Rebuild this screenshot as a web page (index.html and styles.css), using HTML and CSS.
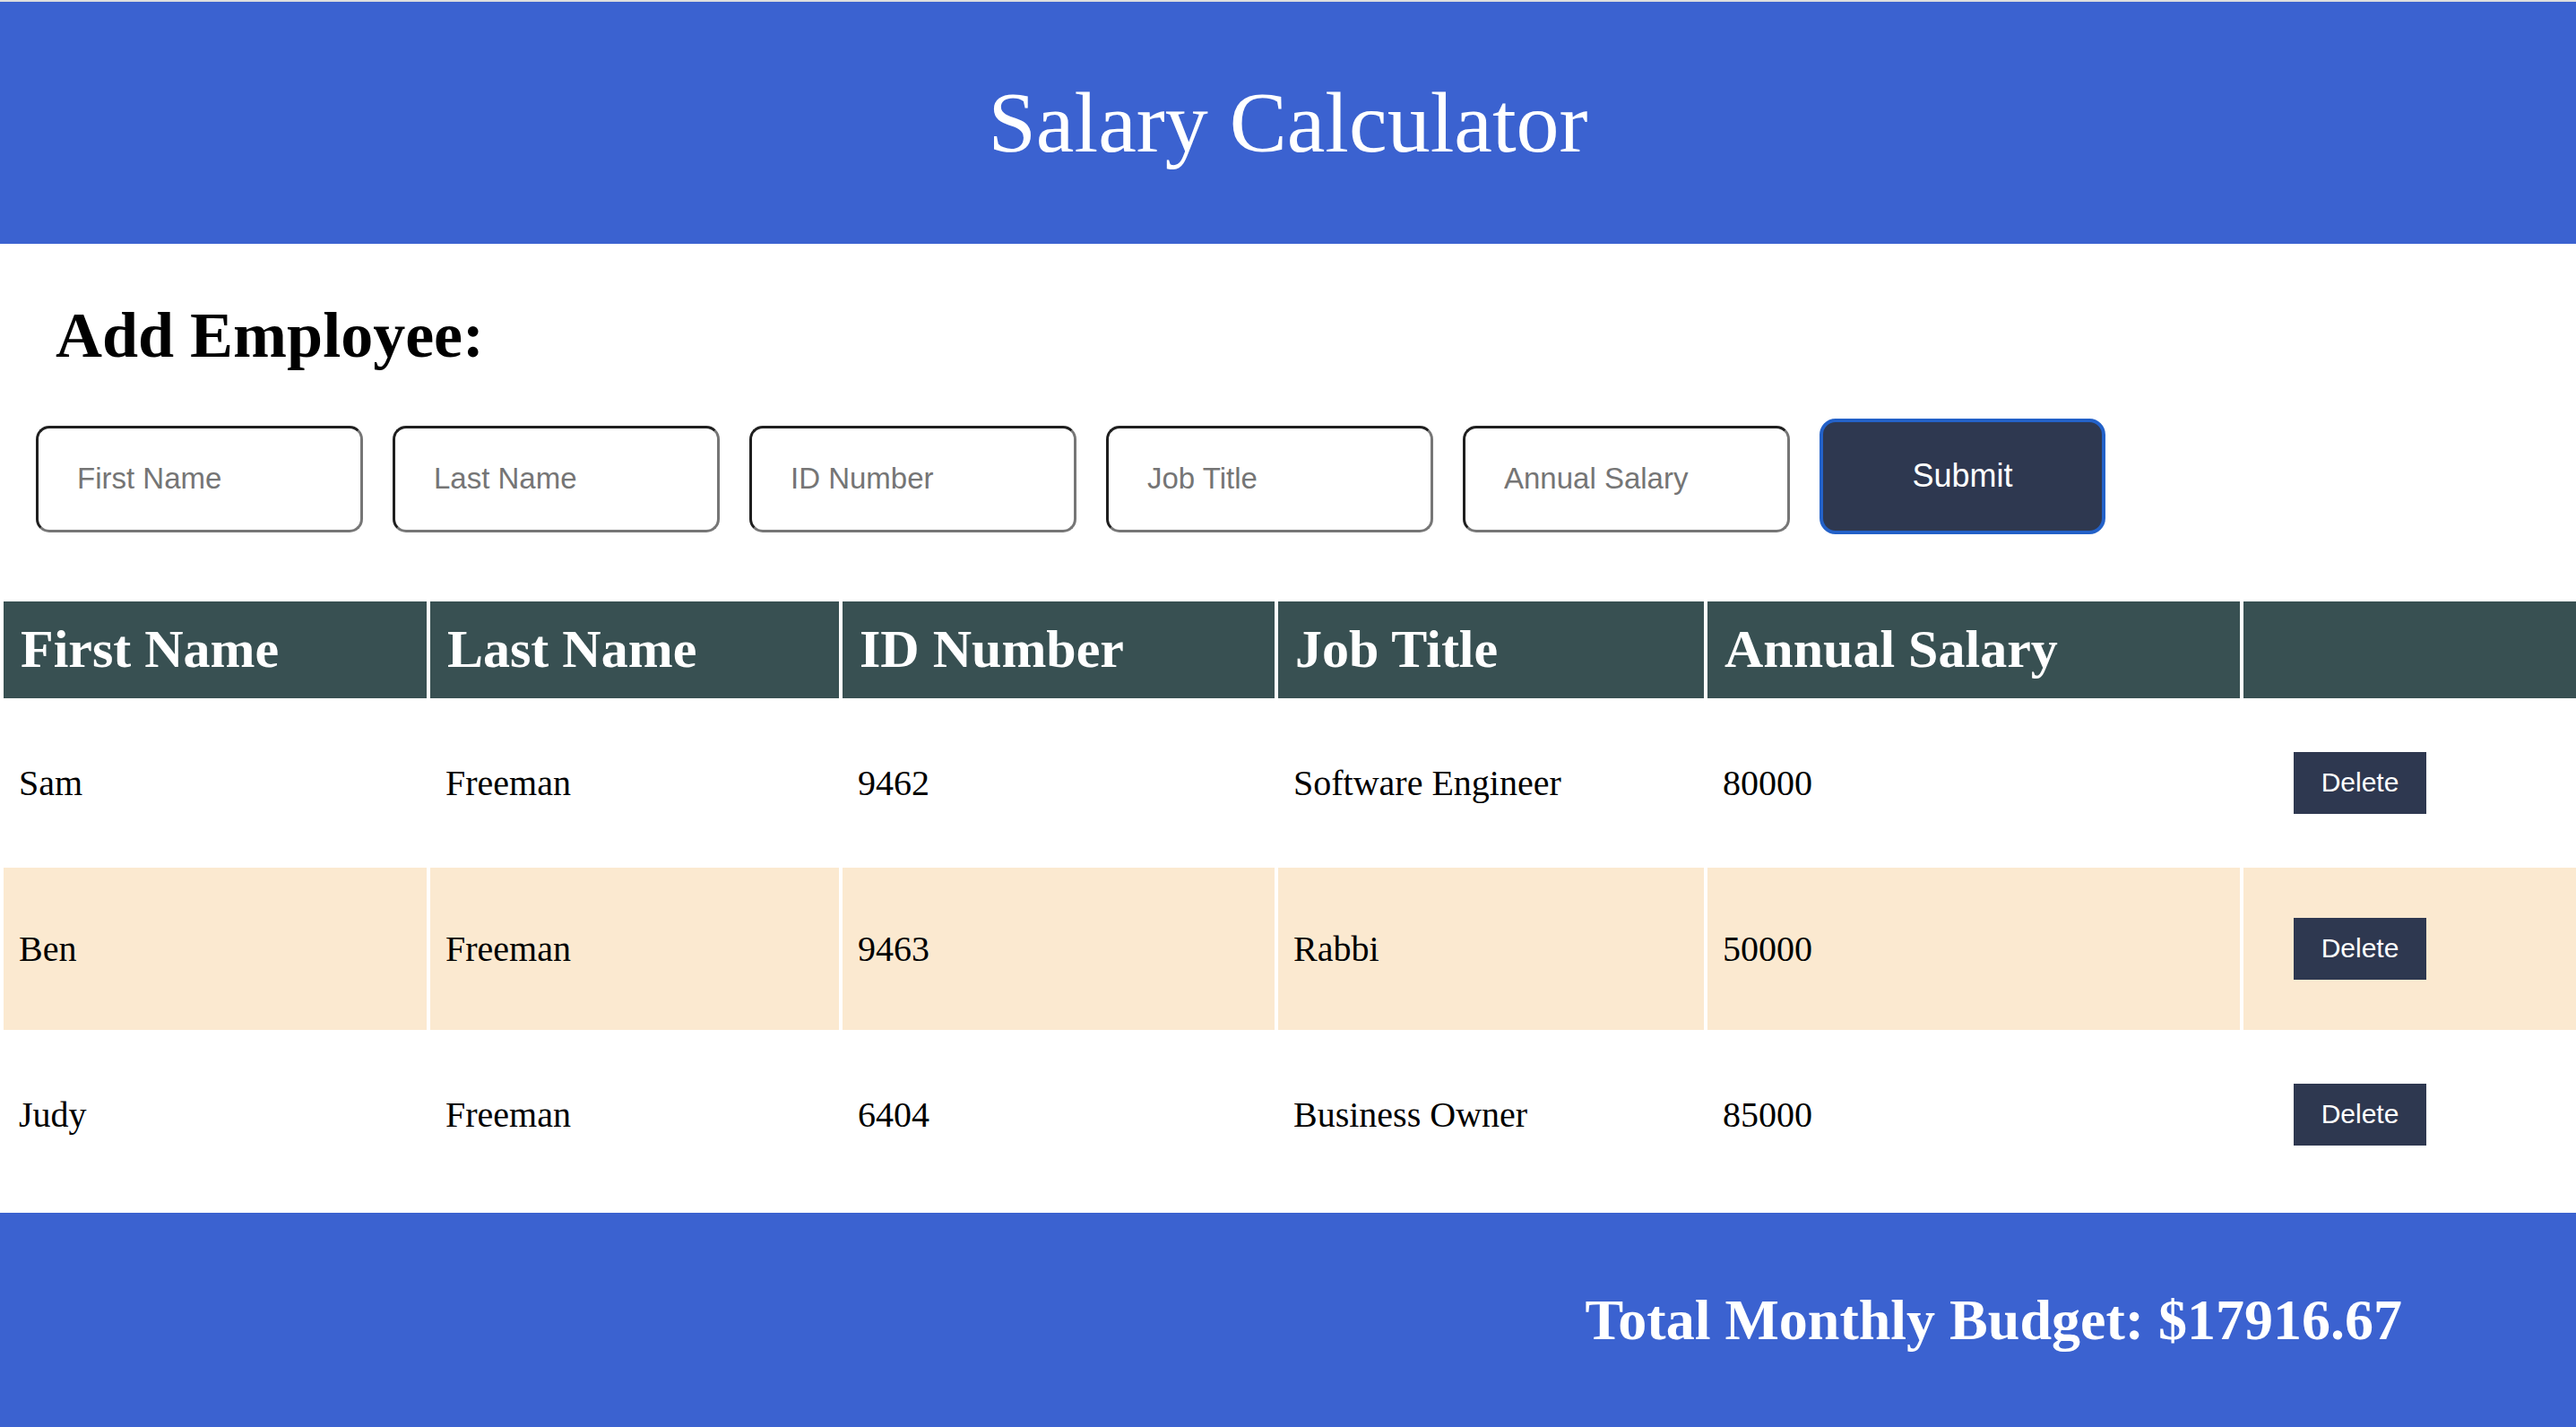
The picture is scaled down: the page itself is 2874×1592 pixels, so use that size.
FILE: index.html
```html
<!DOCTYPE html>
<html lang="en">
<head>
<meta charset="utf-8">
<title>Salary Calculator</title>
<link rel="stylesheet" href="styles.css">
</head>
<body>
  <header class="top-bar">
    <h1 class="title">Salary Calculator</h1>
  </header>

  <section class="add-section">
    <h2 class="add-title">Add Employee:</h2>
    <form class="add-form">
      <input class="field" type="text" placeholder="First Name">
      <input class="field" type="text" placeholder="Last Name">
      <input class="field" type="text" placeholder="ID Number">
      <input class="field" type="text" placeholder="Job Title">
      <input class="field" type="text" placeholder="Annual Salary">
      <button class="submit-btn" type="button">Submit</button>
    </form>
  </section>

  <table class="emp-table">
    <colgroup>
      <col class="c1"><col class="c2"><col class="c3"><col class="c4"><col class="c5"><col class="c6">
    </colgroup>
    <thead>
      <tr class="head-row">
        <th>First Name</th>
        <th>Last Name</th>
        <th>ID Number</th>
        <th>Job Title</th>
        <th>Annual Salary</th>
        <th></th>
      </tr>
    </thead>
    <tbody>
      <tr class="row">
        <td>Sam</td><td>Freeman</td><td>9462</td><td>Software Engineer</td><td>80000</td>
        <td><button class="del-btn" type="button">Delete</button></td>
      </tr>
      <tr class="row alt">
        <td>Ben</td><td>Freeman</td><td>9463</td><td>Rabbi</td><td>50000</td>
        <td><button class="del-btn" type="button">Delete</button></td>
      </tr>
      <tr class="row">
        <td>Judy</td><td>Freeman</td><td>6404</td><td>Business Owner</td><td>85000</td>
        <td><button class="del-btn" type="button">Delete</button></td>
      </tr>
    </tbody>
  </table>

  <footer class="bottom-bar">
    <h3 class="total">Total Monthly Budget: $17916.67</h3>
  </footer>
</body>
</html>
```

FILE: styles.css
```css
html, body {
  margin: 0;
  padding: 0;
}

body {
  font-family: "Liberation Serif", "Times New Roman", serif;
  color: #000;
  background: #fff;
  border-top: 2px solid #dedede;
  width: 2874px;
  overflow: hidden;
}

.top-bar {
  height: 270px;
  background: #3b62d0;
  display: flex;
  align-items: center;
  justify-content: center;
}

.title {
  margin: 0;
  font-size: 96px;
  font-weight: normal;
  line-height: 1.15;
  color: #fff;
}

.add-section {
  padding: 0 0 0 40px;
}

.add-title {
  margin: 61px 0 0 22px;
  font-size: 72px;
  font-weight: bold;
  line-height: 1.15;
}

.add-form {
  display: flex;
  align-items: flex-end;
  gap: 33px;
  margin-top: 51px;
}

.field {
  box-sizing: border-box;
  width: 365px;
  height: 119px;
  margin: 0 0 2px 0;
  padding: 0 0 0 43px;
  border: 3px solid #767676;
  border-top-color: #1f1f1f;
  border-left-color: #1f1f1f;
  border-radius: 15px;
  background: #fff;
  font-family: "Liberation Sans", Arial, sans-serif;
  font-size: 33px;
  color: #000;
  outline: none;
}

.field::placeholder {
  color: #757575;
}

.submit-btn {
  box-sizing: border-box;
  width: 319px;
  height: 129px;
  border: 4px solid #2361c8;
  border-radius: 18px;
  background: #2e3850;
  color: #fff;
  font-family: "Liberation Sans", Arial, sans-serif;
  font-size: 36px;
  padding: 0;
}

.emp-table {
  margin-top: 71px;
  width: 2890px;
  table-layout: fixed;
  border-collapse: separate;
  border-spacing: 4px;
}

.c1 { width: 472px; }
.c2 { width: 456px; }
.c3 { width: 482px; }
.c4 { width: 475px; }
.c5 { width: 594px; }
.c6 { width: auto; }

.head-row {
  height: 108px;
}

.head-row th {
  background: #385052;
  color: #fff;
  font-size: 60px;
  font-weight: bold;
  text-align: left;
  padding: 0 0 0 19px;
  vertical-align: middle;
  white-space: nowrap;
}

.row {
  height: 181px;
}

.row td {
  font-size: 40px;
  padding: 0 0 0 17px;
  vertical-align: middle;
  white-space: nowrap;
}

.row.alt td {
  background: #fbe9d0;
}

.del-btn {
  margin-left: 39px;
  width: 148px;
  height: 69px;
  border: none;
  border-radius: 0;
  background: #2e3850;
  color: #fff;
  font-family: "Liberation Sans", Arial, sans-serif;
  font-size: 30px;
  padding: 0;
  vertical-align: middle;
}

.bottom-bar {
  margin-top: 15px;
  height: 240px;
  background: #3b62d0;
  display: flex;
  align-items: center;
  justify-content: flex-end;
  padding-right: 194px;
}

.total {
  margin: 0;
  font-size: 64px;
  font-weight: bold;
  color: #fff;
  line-height: 1.15;
}
```
